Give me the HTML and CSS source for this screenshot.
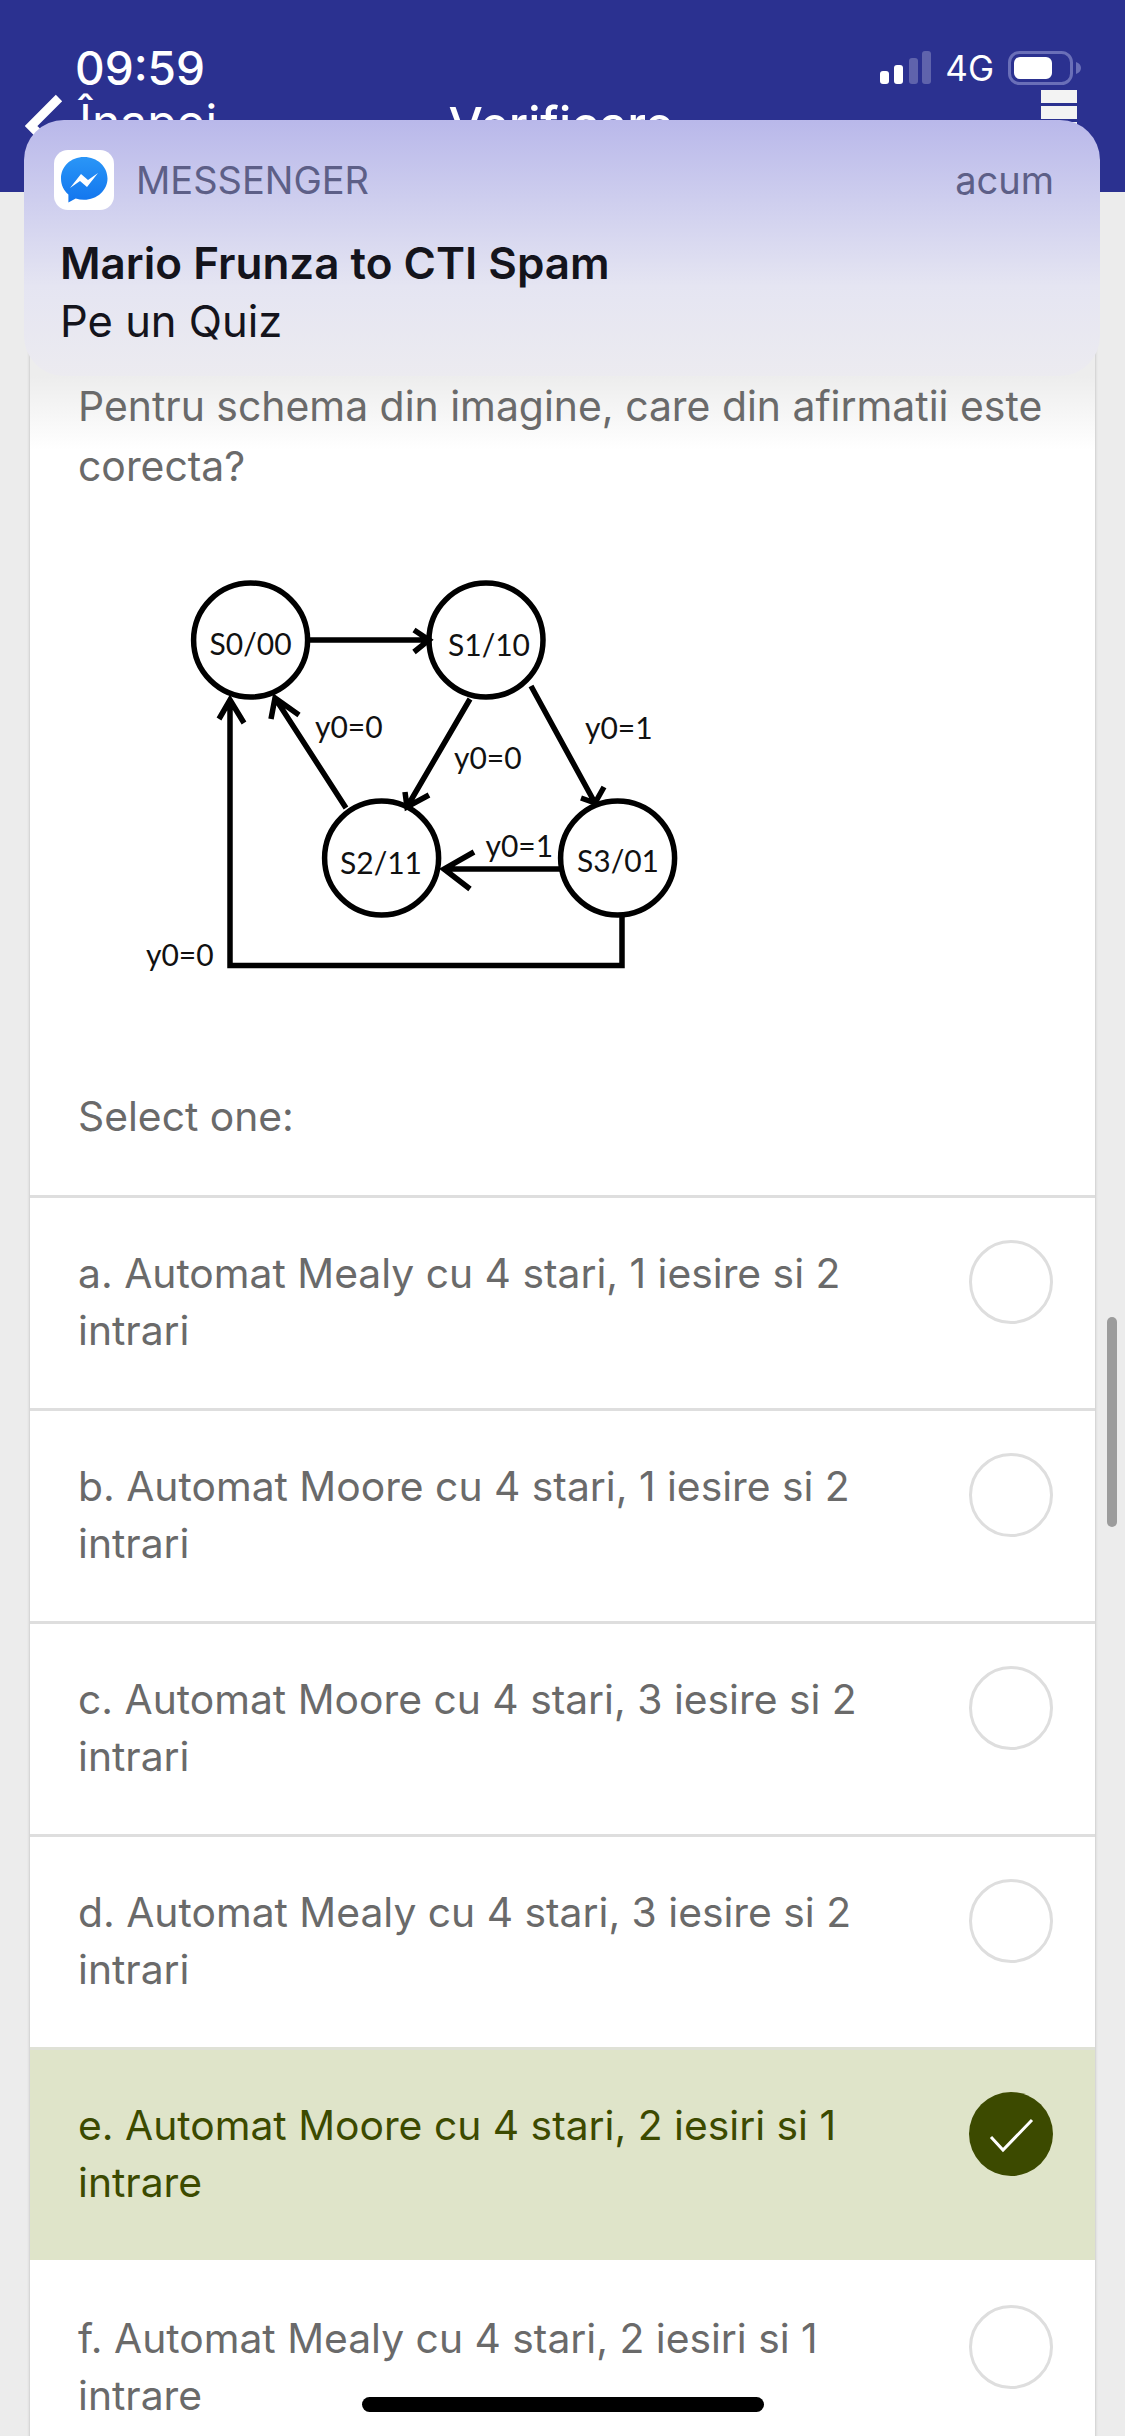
FILE: index.html
```html
<!DOCTYPE html>
<html lang="ro">
<head>
    <meta charset="UTF-8">
    <meta name="viewport" content="width=device-width, initial-scale=1.0">
    <title>Verificare</title>
    <link rel="stylesheet" href="styles.css">
</head>
<body>
    <header class="top">
        <div class="status">
            <span class="clock">09:59</span>
            <div class="status-right">
                <svg class="signal" width="52" height="34" viewBox="0 0 52 34">
                    <rect x="0" y="20" width="9" height="13" rx="3" fill="#fff"/>
                    <rect x="14" y="14" width="9" height="19" rx="3" fill="#fff"/>
                    <rect x="29" y="7" width="9" height="26" rx="3" fill="#5f63ac"/>
                    <rect x="42" y="0" width="9" height="33" rx="3" fill="#5f63ac"/>
                </svg>
                <span class="network">4G</span>
                <svg class="battery" width="74" height="34" viewBox="0 0 74 34">
                    <rect x="1.5" y="1.5" width="62" height="31" rx="10" fill="none" stroke="#6a6fb8" stroke-width="3"/>
                    <rect x="6" y="6" width="38" height="22" rx="6" fill="#fff"/>
                    <path d="M68 11c3 1 5 3 5 6s-2 5-5 6z" fill="#6a6fb8"/>
                </svg>
            </div>
        </div>
        <nav class="nav">
            <div class="back">
                <svg class="chevron" width="40" height="70" viewBox="0 0 40 70">
                    <path d="M34 6 6 34l28 28" fill="none" stroke="#fff" stroke-width="9"/>
                </svg>
                <span>Înapoi</span>
            </div>
            <div class="nav-title">Verificare</div>
            <div class="menu"><i></i><i></i><i></i></div>
        </nav>
    </header>

    <main class="card">
        <p class="question">Pentru schema din imagine, care din afirmatii este corecta?</p>

        <svg class="diagram" width="580" height="440" viewBox="0 0 580 440">
            <g fill="#fff" stroke="#000" stroke-width="5.500">
                <circle cx="130.600" cy="80" r="57"/>
                <circle cx="366" cy="80" r="57"/>
                <circle cx="261.600" cy="298" r="57"/>
                <circle cx="497.600" cy="298" r="57"/>
            </g>
            <g fill="none" stroke="#000" stroke-width="5.500">
                <path d="M189 80H309M294 70 309 80 294 92"/>
                <path d="M350 139 287 247M285 232 287 247 309 235"/>
                <path d="M411 126 475 243M461 238 475 243 484 227"/>
                <path d="M226 248 155 138M151 159 155 138 179 155"/>
                <path d="M440 309H324M354 292 324 309 350 329"/>
                <path d="M502 355V405.600H110V140M99 159 110 140 124 163"/>
            </g>
            <g class="state-text">
                <text x="130.600" y="95" text-anchor="middle">S0/00</text>
                <text x="369" y="96" text-anchor="middle">S1/10</text>
                <text x="261" y="314" text-anchor="middle">S2/11</text>
                <text x="498" y="312" text-anchor="middle">S3/01</text>
                <text x="195" y="178">y0=0</text>
                <text x="334" y="209">y0=0</text>
                <text x="465" y="179">y0=1</text>
                <text x="365.500" y="297">y0=1</text>
                <text x="26" y="406">y0=0</text>
            </g>
        </svg>

        <p class="select-one">Select one:</p>

        <div class="option">
            <div class="option-text">a. Automat Mealy cu 4 stari, 1 iesire si 2 intrari</div>
            <span class="radio"></span>
        </div>
        <div class="option">
            <div class="option-text">b. Automat Moore cu 4 stari, 1 iesire si 2 intrari</div>
            <span class="radio"></span>
        </div>
        <div class="option">
            <div class="option-text">c. Automat Moore cu 4 stari, 3 iesire si 2 intrari</div>
            <span class="radio"></span>
        </div>
        <div class="option">
            <div class="option-text">d. Automat Mealy cu 4 stari, 3 iesire si 2 intrari</div>
            <span class="radio"></span>
        </div>
        <div class="option selected">
            <div class="option-text">e. Automat Moore cu 4 stari, 2 iesiri si 1 intrare</div>
            <span class="radio">
                <svg width="84" height="84" viewBox="0 0 84 84">
                    <path d="M22 45 34 58 63 28" fill="none" stroke="#fff" stroke-width="3"/>
                </svg>
            </span>
        </div>
        <div class="option after-selected">
            <div class="option-text">f. Automat Mealy cu 4 stari, 2 iesiri si 1 intrare</div>
            <span class="radio"></span>
        </div>
    </main>

    <div class="scrollbar"></div>
    <div class="home-bar"></div>

    <aside class="notif">
        <div class="notif-head">
            <span class="app-icon">
                <svg width="60" height="60" viewBox="0 0 60 60">
                    <defs>
                        <linearGradient id="bubble" x1="0" y1="0" x2="0" y2="1">
                            <stop offset="0" stop-color="#2a96f7"/>
                            <stop offset="1" stop-color="#1275ee"/>
                        </linearGradient>
                    </defs>
                    <path d="M30 7C16.700 7 7 16.500 7 28.500c0 6.600 2.800 12.100 7.400 15.900v8.100l7.300-3.900c2.600.8 5.300 1.200 8.300 1.200 13.300 0 23.500-9.700 23.500-21.300C53.500 16.500 43.300 7 30 7z" fill="url(#bubble)"/>
                    <path d="M16 38 27 24l7 6 10-7-11 14-7-6z" fill="#fff"/>
                </svg>
            </span>
            <span class="app-name">MESSENGER</span>
            <span class="notif-time">acum</span>
        </div>
        <div class="notif-title">Mario Frunza to CTI Spam</div>
        <div class="notif-body">Pe un Quiz</div>
    </aside>
</body>
</html>
```

FILE: styles.css
```css
* {
    box-sizing: border-box;
}
html, body {
    margin: 0;
    height: 2436px;
    overflow: hidden;
}
body {
    position: relative;
    font-family: Inter, "Noto Sans", sans-serif;
    background-color: #ececec;
    color: #6a6a6a;
}

/* header */
.top {
    height: 192px;
    background-color: #2b3190;
    color: #fff;
}
.status {
    display: flex;
    justify-content: space-between;
    align-items: center;
    height: 92px;
    padding: 44px 43px 0 75px;
}
.clock {
    font-size: 46px;
    font-weight: 500;
}
.status-right {
    display: flex;
    align-items: center;
}
.network {
    font-size: 35px;
    margin: 0 14px 0 13px;
}
.nav {
    display: grid;
    grid-template-columns: 1fr auto 1fr;
    padding: 0 48px 0 25px;
}
.back {
    display: flex;
    gap: 14px;
    font-size: 48px;
    line-height: 60px;
}
.nav-title {
    margin-left: 20px;
    font-size: 48.500px;
    font-weight: 500;
    line-height: 66px;
}
.menu {
    justify-self: end;
    width: 36px;
    margin-top: -2px;
}
.menu i {
    display: block;
    height: 13px;
    margin-bottom: 3px;
    background-color: #f3f3f3;
}

/* quiz */
.card {
    margin: 0 30px;
    padding-top: 184px;
    background: linear-gradient(#ededed 184px, #fff 258px);
    box-shadow: 0 0 3px #b5b5b5;
    height: 2300px;
}
.question {
    margin: 0;
    padding: 0 40px 0 48px;
    font-size: 40.900px;
    line-height: 60px;
}
.diagram {
    display: block;
    margin: 64px 0 0 90px;
}
.state-text {
    font-family: Lato, sans-serif;
    font-size: 30px;
    fill: #111;
}
.select-one {
    margin: 87px 0 50px;
    padding-left: 48px;
    font-size: 40.800px;
    line-height: 58px;
}
.option {
    display: flex;
    justify-content: space-between;
    height: 213px;
    padding: 47px 42px 0 48px;
    border-top: 3px solid #dedede;
}
.option-text {
    width: 800px;
    font-size: 40.800px;
    line-height: 57px;
}
.radio {
    flex: none;
    width: 84px;
    height: 84px;
    margin-top: -5px;
    border: 3px solid #dedede;
    border-radius: 50%;
}
.selected {
    background-color: #dfe4c9;
    color: #3c4a00;
    border-top-color: #dfe1d6;
}
.selected .radio {
    background-color: #3c4a00;
    border: none;
}
.selected .radio svg {
    display: block;
}
.after-selected {
    border-top-color: #fff;
}

/* overlays */
.scrollbar {
    position: absolute;
    left: 1107px;
    top: 1317px;
    width: 10px;
    height: 210px;
    border-radius: 5px;
    background-color: #9c9c9c;
}
.home-bar {
    position: absolute;
    left: 362px;
    top: 2397px;
    width: 402px;
    height: 15px;
    border-radius: 8px;
    background-color: #000;
}
.notif {
    position: absolute;
    left: 24px;
    top: 120px;
    width: 1076px;
    height: 256px;
    padding: 30px 46px 0 30px;
    border-radius: 40px;
    background: linear-gradient(#b9b8ea, #cdcdee 30%, #e5e5f2 65%, #ecebf0);
    color: #14141c;
}
.notif-head {
    display: flex;
    align-items: center;
    height: 60px;
    color: #5d5f87;
    font-size: 38px;
}
.app-icon {
    width: 60px;
    height: 60px;
    margin-right: 22px;
    border-radius: 14px;
    background-color: #fff;
}
.app-icon svg {
    display: block;
}
.notif-time {
    margin-left: auto;
}
.notif-title {
    margin: 24px 0 0 6px;
    font-size: 44px;
    font-weight: 600;
    line-height: 58px;
}
.notif-body {
    margin-left: 6px;
    font-size: 43.500px;
    line-height: 58px;
}
```
